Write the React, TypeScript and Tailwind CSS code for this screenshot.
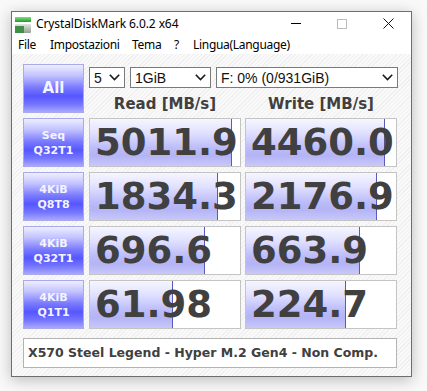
import React from "react";

const dv = { fontFamily: '"DejaVu Sans", Verdana, sans-serif' };

function Chevron() {
  return (
    <svg width="11" height="7" viewBox="0 0 11 7" className="shrink-0">
      <polyline points="0.8,0.8 5.5,5.5 10.2,0.8" fill="none" stroke="#1a1a1a" strokeWidth="1.6" />
    </svg>
  );
}

function Select({ w, text }: { w: string; text: string }) {
  return (
    <div className={`${w} h-[21px] border border-[#7a7a7a] bg-white flex items-center justify-between pl-[4px] pr-[4px] text-[14px] text-[#111] font-['Liberation_Sans',Arial,sans-serif] leading-none`}>
      <span>{text}</span>
      <Chevron />
    </div>
  );
}

function Label({ l1, l2 }: { l1: string; l2?: string }) {
  return (
    <div className="w-[61px] h-full shrink-0 border border-[#a9a9ec] bg-[linear-gradient(to_bottom,#eeeeff_0%,#c4c4ff_22%,#7a7aff_48%,#5656ff_66%,#7676ff_84%,#a8a8ff_100%)] flex flex-col items-center justify-center text-[#f4f4ff] font-bold leading-[15px]" style={dv}>
      {l2 ? (
        <>
          <span className="text-[11px]">{l1}</span>
          <span className="text-[11px]">{l2}</span>
        </>
      ) : (
        <span className="text-[15px]">{l1}</span>
      )}
    </div>
  );
}

function Cell({ value, bar }: { value: string; bar: number }) {
  return (
    <div className="relative w-[152px] h-full shrink-0 border border-[#c4c4c4] bg-white overflow-hidden">
      <div
        className="absolute left-0 top-0 bottom-0 border-r border-[#5a5ab8] bg-[linear-gradient(to_bottom,#f6f6ff_0%,#e0e0ff_30%,#bcbcfa_62%,#b4b4f6_78%,#c8c8fa_100%)]"
        style={{ width: bar }}
      />
      <div className="relative h-full flex items-center pl-[5px] text-[37px] leading-none font-bold text-[#404040] whitespace-nowrap" style={dv}>
        {value}
      </div>
    </div>
  );
}

function AppIcon() {
  return (
    <svg width="16" height="16" viewBox="0 0 16 16">
      <defs>
        <linearGradient id="g1" x1="0" y1="0" x2="0" y2="1">
          <stop offset="0" stopColor="#7fe07f" />
          <stop offset="1" stopColor="#1f9a2a" />
        </linearGradient>
        <linearGradient id="g2" x1="0" y1="0" x2="0" y2="1">
          <stop offset="0" stopColor="#e4e4e4" />
          <stop offset="1" stopColor="#9a9a9a" />
        </linearGradient>
      </defs>
      <rect x="0" y="0" width="16" height="5" fill="url(#g1)" />
      <rect x="0" y="7" width="16" height="9" rx="1" fill="url(#g2)" />
      <rect x="0" y="9" width="9" height="7" fill="#3f8f45" />
      <rect x="11" y="11" width="2" height="2" fill="#7ce07c" />
    </svg>
  );
}

const rows = [
  { l1: "Seq", l2: "Q32T1", r: "5011.9", rb: 142, w: "4460.0", wb: 139 },
  { l1: "4KiB", l2: "Q8T8", r: "1834.3", rb: 128, w: "2176.9", wb: 131 },
  { l1: "4KiB", l2: "Q32T1", r: "696.6", rb: 115, w: "663.9", wb: 114 },
  { l1: "4KiB", l2: "Q1T1", r: "61.98", rb: 83, w: "224.7", wb: 100 },
];

export default function App() {
  return (
    <div className="w-[427px] h-[391px] bg-[#f9f9f9] pt-[11px] pl-[11px] overflow-hidden">
      <div className="w-[401px] h-[366px] border border-[#6e6e6e] bg-white flex flex-col shadow-[0_3px_14px_rgba(0,0,0,0.25)]">
        {/* title bar */}
        <div className="h-[23px] flex items-center pl-[2px] text-[12px] text-black font-['Noto_Sans',sans-serif] shrink-0">
          <div className="w-[16px] h-[16px] ml-[1px] mt-[3px]"><AppIcon /></div>
          <span className="ml-[5px] mt-[1px] tracking-[-0.1px]">CrystalDiskMark 6.0.2 x64</span>
          <div className="ml-auto flex items-center h-full">
            <div className="w-[46px] h-full flex items-center justify-center">
              <div className="w-[10px] h-px bg-black" />
            </div>
            <div className="w-[46px] h-full flex items-center justify-center">
              <div className="w-[10px] h-[10px] border border-[#bdbdbd]" />
            </div>
            <div className="w-[46px] h-full flex items-center justify-center">
              <svg width="11" height="11" viewBox="0 0 11 11">
                <path d="M0.5 0.5 L10.5 10.5 M10.5 0.5 L0.5 10.5" stroke="#111" strokeWidth="1" />
              </svg>
            </div>
          </div>
        </div>
        {/* menu */}
        <div className="h-[19px] flex items-center text-[12px] text-black font-['Noto_Sans',sans-serif] shrink-0 tracking-[-0.3px] whitespace-nowrap">
          <span className="ml-[6px] w-[32px]">File</span>
          <span className="w-[82px]">Impostazioni</span>
          <span className="w-[42px]">Tema</span>
          <span className="w-[19px]">?</span>
          <span>Lingua(Language)</span>
        </div>
        {/* content */}
        <div className="flex-1 flex flex-col pl-[11px] pr-[11px] pt-[10px] bg-[repeating-linear-gradient(135deg,#f9f9f9_0px,#f9f9f9_2px,#f0f0f0_2px,#f0f0f0_3px)]">
          <div className="h-[49px] flex gap-[5px]">
            <Label l1="All" />
            <div className="flex flex-col">
              <div className="flex gap-[5px] mt-[3px]">
                <Select w="w-[36px]" text="5" />
                <Select w="w-[81px]" text="1GiB" />
                <Select w="w-[182px]" text="F: 0% (0/931GiB)" />
              </div>
              <div className="flex mt-[9px] text-[15px] font-bold text-[#404040] leading-none" style={dv}>
                <div className="w-[152px] text-center">Read [MB/s]</div>
                <div className="w-[4px]" />
                <div className="w-[152px] text-center">Write [MB/s]</div>
              </div>
            </div>
          </div>
          <div className="flex flex-col gap-[5px] mt-[5px]">
            {rows.map((r, i) => (
              <div key={i} className="h-[49px] flex">
                <Label l1={r.l1} l2={r.l2} />
                <div className="w-[5px]" />
                <Cell value={r.r} bar={r.rb} />
                <div className="w-[4px]" />
                <Cell value={r.w} bar={r.wb} />
              </div>
            ))}
          </div>
          <div className="mt-[9px] h-[30px] w-[374px] border border-[#b4b4b4] bg-white flex items-center pl-[4px] text-[12.5px] font-bold text-[#404040]" style={dv}>
            X570 Steel Legend - Hyper M.2 Gen4 - Non Comp.
          </div>
        </div>
      </div>
    </div>
  );
}
